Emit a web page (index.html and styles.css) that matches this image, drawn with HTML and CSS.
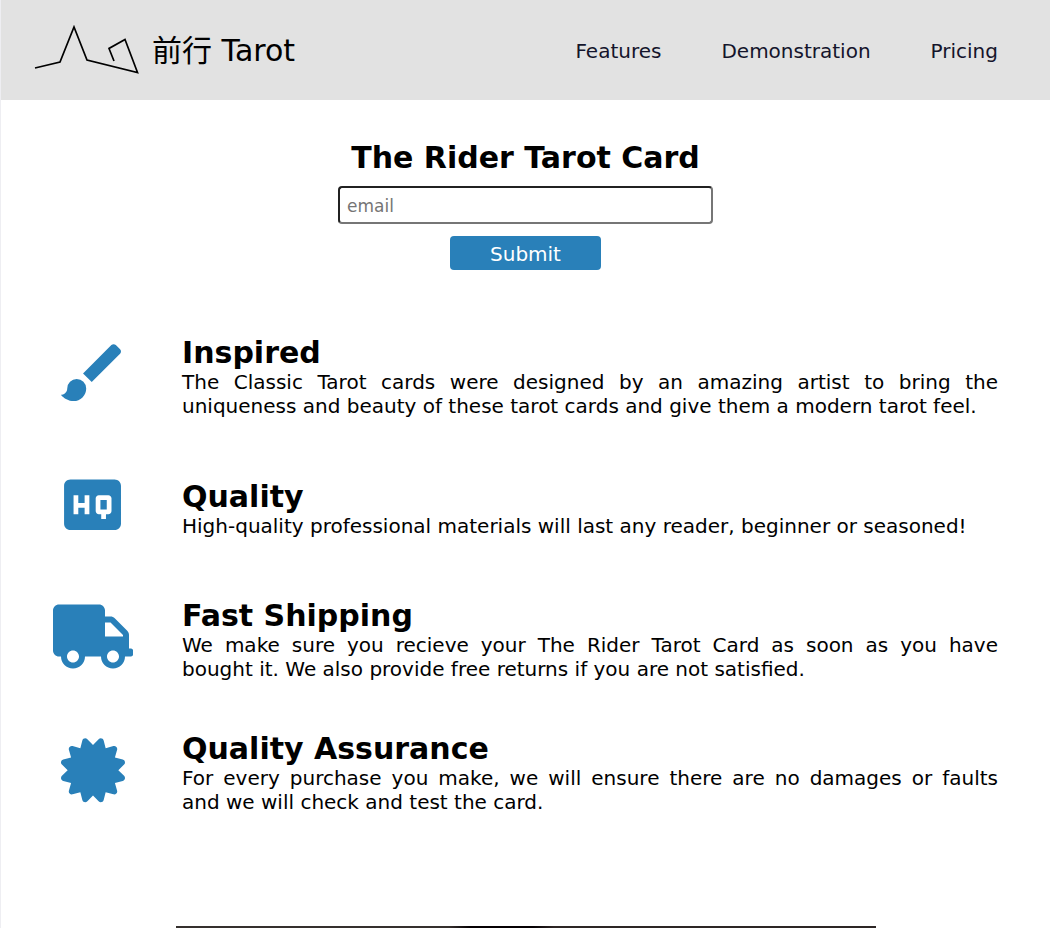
FILE: index.html
```html
<!DOCTYPE html>
<html lang="en">
<head>
<meta charset="utf-8">
<title>前行 Tarot</title>
<link rel="stylesheet" href="styles.css">
</head>
<body>
<header class="header">
  <div class="brand">
    <svg class="brand-mark" viewBox="0 0 106 50" aria-hidden="true"><path d="M1 43 26 37 40 2 53 35 103.500 47.500 91 14.500 75 23.500 80 36"/></svg>
    <span class="brand-name">前行 Tarot</span>
  </div>
  <nav class="nav">
    <a href="#features">Features</a>
    <a href="#demonstration">Demonstration</a>
    <a href="#pricing">Pricing</a>
  </nav>
</header>
<main>
  <form class="signup">
    <h1 class="title">The Rider Tarot Card</h1>
    <input class="email" type="email" placeholder="email" aria-label="email">
    <button class="submit" type="submit">Submit</button>
  </form>
  <section class="features" id="features">
    <article class="feature">
      <svg class="icon" viewBox="-0.5 0.1 25.3 25.3" aria-hidden="true"><path d="M20.71 4.63L19.37 3.29C19 2.9 18.35 2.9 17.96 3.29L9 12.25L11.75 15L20.71 6.04C21.1 5.65 21.1 5 20.71 4.63M7 14A3 3 0 0 0 4 17C4 18.31 2.84 19 2 19C2.92 20.22 4.5 21 6 21A4 4 0 0 0 10 17A3 3 0 0 0 7 14Z"/></svg>
      <div>
        <h2 class="title">Inspired</h2>
        <p class="copy">The Classic Tarot cards were designed by an amazing artist to bring the uniqueness and beauty of these tarot cards and give them a modern tarot feel.</p>
      </div>
    </article>
    <article class="feature">
      <svg class="icon" viewBox="-0.5 0.4 25.3 25.3" aria-hidden="true"><path d="M19 4H5c-1.110 0-2 .9-2 2v12c0 1.100.89 2 2 2h14c1.100 0 2-.9 2-2V6c0-1.100-.9-2-2-2zm-8 11H9.500v-2h-2v2H6V9h1.500v2.500h2V9H11v6zm7-1c0 .55-.45 1-1 1h-.75v1.500h-1.500V15H14c-.55 0-1-.45-1-1v-4c0-.55.45-1 1-1h3c.55 0 1 .45 1 1v4zm-3.500-.5h2v-3h-2v3z"/></svg>
      <div>
        <h2 class="title">Quality</h2>
        <p class="copy">High-quality professional materials will last any reader, beginner or seasoned!</p>
      </div>
    </article>
    <article class="feature">
      <svg class="icon" viewBox="0 -52 640 640" aria-hidden="true"><path d="M624 352h-16V243.9c0-12.7-5.1-24.9-14.1-33.9L494 110.1c-9-9-21.2-14.1-33.9-14.1H416V48c0-26.5-21.5-48-48-48H48C21.5 0 0 21.5 0 48v320c0 26.5 21.5 48 48 48h16c0 53 43 96 96 96s96-43 96-96h128c0 53 43 96 96 96s96-43 96-96h48c8.8 0 16-7.2 16-16v-32c0-8.8-7.2-16-16-16zM160 464c-26.5 0-48-21.5-48-48s21.5-48 48-48 48 21.5 48 48-21.5 48-48 48zm320 0c-26.5 0-48-21.5-48-48s21.5-48 48-48 48 21.5 48 48-21.5 48-48 48zm80-208H416V144h44.1l99.9 99.9V256z"/></svg>
      <div>
        <h2 class="title">Fast Shipping</h2>
        <p class="copy">We make sure you recieve your The Rider Tarot Card as soon as you have bought&nbsp;it. We also provide free returns if you are not satisfied.</p>
      </div>
    </article>
    <article class="feature">
      <svg class="icon" viewBox="-64 -58 640 640" aria-hidden="true"><path d="M458.622 255.92l45.985-45.005c13.708-12.977 7.316-36.039-10.664-40.339l-62.65-15.99 17.661-62.015c4.991-17.838-11.829-34.663-29.661-29.671l-61.994 17.667-15.984-62.671C337.085.197 313.765-6.276 300.99 7.228L256 53.57 211.011 7.229c-12.63-13.351-36.047-7.234-40.325 10.668l-15.984 62.671-61.995-17.667C74.87 57.907 58.056 74.738 63.046 92.572l17.661 62.015-62.65 15.99C.069 174.878-6.31 197.944 7.392 210.915l45.985 45.005-45.985 45.004c-13.708 12.977-7.316 36.039 10.664 40.339l62.65 15.99-17.661 62.015c-4.991 17.838 11.829 34.663 29.661 29.671l61.994-17.667 15.984 62.671c4.439 18.575 27.696 24.018 40.325 10.668L256 458.61l44.989 46.001c12.5 13.488 35.987 7.486 40.325-10.668l15.984-62.671 61.994 17.667c17.836 4.994 34.651-11.837 29.661-29.671l-17.661-62.015 62.65-15.99c17.987-4.302 24.366-27.367 10.664-40.339l-45.984-45.004z"/></svg>
      <div>
        <h2 class="title">Quality Assurance</h2>
        <p class="copy">For every purchase you make, we will ensure there are no damages or faults and&nbsp;we will check and test the card.</p>
      </div>
    </article>
  </section>
  <div class="demo" id="demonstration"></div>
</main>
</body>
</html>
```

FILE: styles.css
```css
* {
  box-sizing: border-box;
  margin: 0;
}

body {
  border-left: 1px solid #eeeef2;
  background: #fff;
  color: #000;
  font: 20px/24px Verdana, "DejaVu Sans", "Noto Sans CJK SC", sans-serif;
}

.header {
  display: flex;
  align-items: center;
  justify-content: space-between;
  min-height: 100px;
  padding: 0 52px 0 33px;
  background: #e2e2e2;
}

.brand {
  display: flex;
  align-items: center;
  gap: 12px;
}

.brand-mark {
  width: 106px;
  height: 50px;
  fill: none;
  stroke: #000;
  stroke-width: 1.7;
}

.brand-name {
  padding-top: 2px;
  font-size: 30px;
  line-height: 36px;
  white-space: nowrap;
}

.nav {
  display: flex;
  gap: 60px;
  padding-top: 2px;
}

.nav a {
  color: #14142b;
  text-decoration: none;
}

.signup {
  display: flex;
  flex-direction: column;
  align-items: center;
  padding: 40px 20px 65px;
}

.title {
  font-size: 30px;
  line-height: 35px;
  font-weight: bold;
}

.email {
  width: 100%;
  max-width: 375px;
  height: 38px;
  margin: 11px 0 12px;
  padding: 2px 7px 0;
  border: 2px inset #767676;
  border-radius: 4px;
  background: #fff;
  font: 17px Verdana, "DejaVu Sans", sans-serif;
}

.email::placeholder {
  color: #757575;
}

.submit {
  width: 151px;
  height: 34px;
  padding: 2px 0 0;
  border: 0;
  border-radius: 4px;
  background: #2980b9;
  color: #fff;
  font: inherit;
}

.features {
  display: grid;
  gap: 50px;
  padding: 0 52px;
}

.feature {
  display: grid;
  grid-template-columns: 80px 1fr;
  column-gap: 49px;
}

.feature > div {
  align-self: center;
}

.icon {
  width: 80px;
  height: 80px;
  fill: #2980b9;
}

.copy {
  text-align: justify;
}

.demo {
  max-width: 700px;
  height: 2px;
  margin: 112px auto 0;
  background: linear-gradient(90deg, #35302e 39%, #050003 42%, #050003 51%, #2d2625 54%);
}
```
